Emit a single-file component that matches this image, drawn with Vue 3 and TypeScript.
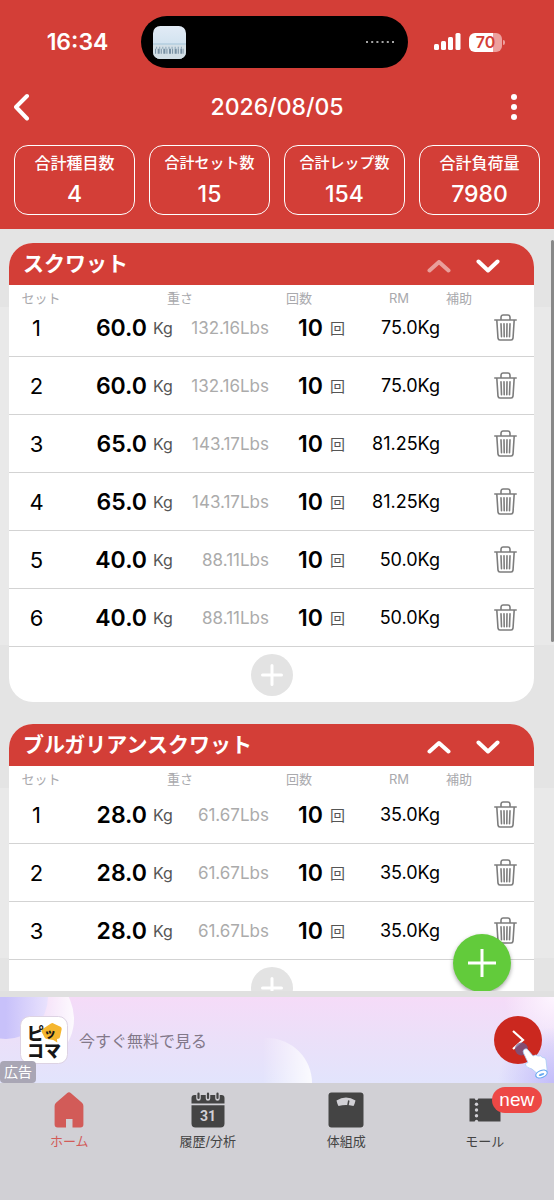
<script setup lang="ts">
interface SetRow {
  weight: string
  lbs: string
  reps: number
  rm: string
}
interface Exercise {
  name: string
  first: boolean
  sets: SetRow[]
}

const row = (weight: string, lbs: string, rm: string): SetRow => ({ weight, lbs, reps: 10, rm })

const stats = [
  { label: '合計種目数', value: '4', small: false },
  { label: '合計セット数', value: '15', small: true },
  { label: '合計レップ数', value: '154', small: true },
  { label: '合計負荷量', value: '7980', small: false },
]

const exercises: Exercise[] = [
  {
    name: 'スクワット',
    first: true,
    sets: [
      row('60.0', '132.16', '75.0'),
      row('60.0', '132.16', '75.0'),
      row('65.0', '143.17', '81.25'),
      row('65.0', '143.17', '81.25'),
      row('40.0', '88.11', '50.0'),
      row('40.0', '88.11', '50.0'),
    ],
  },
  {
    name: 'ブルガリアンスクワット',
    first: false,
    sets: [
      row('28.0', '61.67', '35.0'),
      row('28.0', '61.67', '35.0'),
      row('28.0', '61.67', '35.0'),
    ],
  },
]
</script>

<template>
  <div class="app">
    <header class="top">
      <div class="status">
        <span class="clock">16:34</span>
        <div class="island">
          <svg class="thumb" viewBox="0 0 32 32" aria-hidden="true">
            <defs>
              <linearGradient id="sky" x1="0" y1="0" x2="0" y2="1">
                <stop offset="0" stop-color="#e2ebf6" />
                <stop offset="1" stop-color="#c5dcea" />
              </linearGradient>
            </defs>
            <rect width="32" height="32" rx="7" fill="url(#sky)" />
            <path d="M0 18h32v7a7 7 0 0 1-7 7H7a7 7 0 0 1-7-7z" fill="#d3dfe6" />
            <path d="M0 17.500h32" stroke="#a3c3d6" />
            <path d="M2 24.500h28" stroke="#7890a3" stroke-width="5" stroke-dasharray="1 1.500 2 1" />
            <path d="M3 21h27" stroke="#8aa5b8" stroke-width="2" stroke-dasharray="1 2" />
          </svg>
          <svg class="dots" viewBox="0 0 30 4" aria-hidden="true">
            <path d="M0 2h30" stroke="#a5a5a5" stroke-width="2" stroke-dasharray="2 3.200" />
          </svg>
        </div>
        <div class="signals">
          <svg class="bars" viewBox="0 0 27 18" aria-hidden="true">
            <g fill="#fff">
              <rect x="0" y="11" width="5" height="6" rx="1.500" />
              <rect x="7" y="8" width="5" height="9" rx="1.500" />
              <rect x="14" y="4" width="5" height="13" rx="1.500" />
              <rect x="21.500" y="0" width="5" height="17" rx="1.500" />
            </g>
          </svg>
          <span class="battery">70</span>
        </div>
      </div>

      <div class="nav">
        <button class="nav-btn" aria-label="戻る">
          <svg width="18" height="28" viewBox="0 0 18 28" fill="none" stroke="#fff" stroke-width="4" stroke-linecap="round" stroke-linejoin="round"><path d="M13 3 2 14l11 11.500" /></svg>
        </button>
        <h1>2026/08/05</h1>
        <button class="nav-btn end" aria-label="メニュー">
          <svg width="8" height="28" viewBox="0 0 8 28" fill="#fff"><circle cx="4" cy="4" r="3" /><circle cx="4" cy="14" r="3" /><circle cx="4" cy="24" r="3" /></svg>
        </button>
      </div>

      <dl class="stats">
        <div v-for="s in stats" :key="s.label" class="stat">
          <dt :class="{ small: s.small }">{{ s.label }}</dt>
          <dd>{{ s.value }}</dd>
        </div>
      </dl>
    </header>

    <main class="workouts">
      <section v-for="ex in exercises" :key="ex.name" class="exercise">
        <div class="card">
          <div class="card-head">
            <h2>{{ ex.name }}</h2>
            <button class="move" :disabled="ex.first" aria-label="上へ移動">
              <svg width="24" height="16" viewBox="0 0 24 16"><path d="M2.500 12.500 12 4l9.500 8.500" /></svg>
            </button>
            <button class="move" aria-label="下へ移動">
              <svg width="24" height="16" viewBox="0 0 24 16"><path d="M2.500 3.500 12 12.500 21.500 3.500" /></svg>
            </button>
          </div>
          <table>
            <thead>
              <tr :class="{ tight: ex.first }">
                <th>セット</th>
                <th class="h-weight">重さ</th>
                <th class="h-reps">回数</th>
                <th class="h-rm">RM</th>
                <th class="h-rm">補助</th>
                <th></th>
              </tr>
            </thead>
            <tbody>
              <tr v-for="(s, i) in ex.sets" :key="i">
                <td class="c-set">{{ i + 1 }}</td>
                <td class="c-weight">
                  <strong>{{ s.weight }}</strong>
                  <span class="unit">Kg</span>
                  <span class="lbs">{{ s.lbs }}Lbs</span>
                </td>
                <td class="c-reps">
                  <strong>{{ s.reps }}</strong>
                  <span class="times">回</span>
                </td>
                <td class="c-rm">{{ s.rm }}Kg</td>
                <td></td>
                <td class="c-del">
                  <button class="trash" aria-label="削除">
                    <svg width="23" height="27" viewBox="0 0 23 27" fill="none" stroke="#7d7d7d" stroke-width="1.600" stroke-linecap="round" stroke-linejoin="round">
                      <path d="M.8 6h21.400M2.800 6 4 24.200Q4.200 26 5.900 26h11.200q1.700 0 1.900-1.800L20.200 6M7 6V3.200Q7.200 1 9.200 1h4.600q2 0 2.200 2.200V6" />
                      <path d="m7 9.700.5 13M10 9.700l.2 13M13 9.700l-.2 13M16 9.700l-.5 13" />
                    </svg>
                  </button>
                </td>
              </tr>
            </tbody>
          </table>
          <div class="add-row">
            <button class="add" aria-label="セットを追加">
              <svg width="42" height="42" viewBox="0 0 42 42" stroke="#fff" stroke-width="3" stroke-linecap="round"><path d="M21 11.500v19M11.500 21h19" /></svg>
            </button>
          </div>
        </div>
      </section>
      <span class="scrollbar"></span>
      <button class="fab" aria-label="種目を追加">
        <svg width="58" height="58" viewBox="0 0 58 58" stroke="#fff" stroke-width="3"><path d="M29 15v28M15 29h28" /></svg>
      </button>
    </main>

    <aside class="ad">
      <svg class="bubbles" width="330" height="86" viewBox="0 0 330 86" aria-hidden="true">
        <defs>
          <linearGradient id="fadeA"><stop offset=".6" stop-color="#fff" stop-opacity="0" /><stop offset="1" stop-color="#fff" stop-opacity=".85" /></linearGradient>
          <linearGradient id="fadeB"><stop offset=".45" stop-color="#fff" stop-opacity="0" /><stop offset="1" stop-color="#fff" stop-opacity=".85" /></linearGradient>
          <linearGradient id="fadeC"><stop offset=".5" stop-color="#c8c1fa" /><stop offset="1" stop-color="#e9e2fd" /></linearGradient>
        </defs>
        <circle cx="26" cy="22" r="48" fill="url(#fadeA)" />
        <circle cx="6" cy="0" r="42" fill="url(#fadeC)" />
        <circle cx="267" cy="86" r="45" fill="url(#fadeB)" />
      </svg>
      <svg class="ad-logo" viewBox="0 0 48 48" aria-hidden="true">
        <rect x=".5" y=".5" width="47" height="47" rx="9" fill="#fff" stroke="#ddd3e3" />
        <path d="M31 7.500q1.500-1 3 .2l6.500 3q1.300.7 1.200 2.200L40 21q-.3 1.600-2 1.700l-1 .3.300 3.500-4-2.500-6.500-1q-1.500-.2-2.200-1.600L21.700 16q-.7-1.500.5-2.700z" fill="#f5b62e" />
        <text x="7" y="24" class="logo-type">ピ</text>
        <text x="24" y="22" class="logo-small">ッ</text>
        <text x="7" y="41" class="logo-type">コマ</text>
      </svg>
      <span class="ad-text">今すぐ無料で見る</span>
      <button class="ad-go" aria-label="開く">
        <svg width="58" height="52" viewBox="0 0 58 52" fill="none">
          <circle cx="24" cy="24" r="24" fill="#cb281f" />
          <path d="m19 15 10 9-10 9" stroke="#fff" stroke-width="2.200" />
          <circle cx="27.500" cy="33" r="6.500" fill="#6b5a8f" fill-opacity=".75" />
        </svg>
        <svg class="hand" width="27" height="33" viewBox="0 0 27 33">
          <path d="M2 2.500Q4.500.5 6.500 3.500L11 9q3-2 5 0 3-1 4.500 1.500 3-.5 3.500 2.500l1 9q.5 3-2 5l-5 2-8-7q-5-1-6.500-4Q3 15.500 6 15.500L1.500 6Q.5 4 2 2.500z" fill="#fff" stroke="#a9cdf5" stroke-width=".8" />
          <ellipse cx="19.500" cy="27" rx="6" ry="3.500" transform="rotate(-22 19.500 27)" fill="#fff" stroke="#68aaf0" stroke-width="1.200" />
          <ellipse cx="19.500" cy="27.500" rx="3" ry="1" transform="rotate(-22 19.500 27.500)" fill="#68aaf0" />
        </svg>
      </button>
      <span class="ad-tag">広告</span>
    </aside>

    <nav class="tabs">
      <a class="tab active" href="#home">
        <svg width="30" height="36" viewBox="0 0 30 36" fill="currentColor"><path d="M13 1.200q2-1.700 4 0l11 9.600q1.400 1.300 1.400 3.200v18.500q0 3-3 3H18.500V27H12v8.500H3.600q-3 0-3-3V14q0-1.900 1.400-3.200z" /></svg>
        <span>ホーム</span>
      </a>
      <a class="tab" href="#history">
        <svg width="34" height="36" viewBox="0 0 34 36">
          <path d="M.5 11.500V6q0-3 3-3h27q3 0 3 3v5.500zM.5 13.300h33V31.500q0 4-4 4h-25q-4 0-4-4z" fill="#444" />
          <path d="M7.500 2v4.500M17 2v4.500M26.500 2v4.500" stroke="#d1d0d5" stroke-width="4.500" stroke-linecap="round" />
          <path d="M7.500 1.500V6M17 1.500V6M26.500 1.500V6" stroke="#444" stroke-width="2.200" stroke-linecap="round" />
          <text x="17" y="29" text-anchor="middle" class="day">31</text>
        </svg>
        <span>履歴/分析</span>
      </a>
      <a class="tab" href="#body">
        <svg width="36" height="36" viewBox="0 0 36 36">
          <rect x=".5" y=".5" width="35" height="35" rx="3" fill="#444" />
          <path d="M8.500 8.500q9.500-6 19 0-.8 3.500-2 5.500-7.500-1.800-15 0-1.200-2-2-5.500z" fill="#d1d0d5" />
          <path d="m19.800 14 1-5.500" stroke="#444" stroke-width="1.500" />
        </svg>
        <span>体組成</span>
      </a>
      <a class="tab" href="#mall">
        <svg width="32" height="36" viewBox="0 0 32 36">
          <path d="M.5 6.500h31v23H.5z" fill="#444" />
          <g fill="#d1d0d5"><circle cx="7.500" cy="6.500" r="1.700" /><circle cx="7.500" cy="12.300" r="1.700" /><circle cx="7.500" cy="18" r="1.700" /><circle cx="7.500" cy="23.700" r="1.700" /><circle cx="7.500" cy="29.500" r="1.700" /></g>
        </svg>
        <span>モール</span>
        <em class="badge">new</em>
      </a>
    </nav>
  </div>
</template>

<style>
body {
  margin: 0;
}
</style>

<style scoped>
.app {
  display: flex;
  flex-direction: column;
  height: 100vh;
  font-family: Inter, "Noto Sans CJK JP", sans-serif;
  color: #000;
  background: #e4e4e4;
}
button {
  border: 0;
  padding: 0;
  background: none;
  display: grid;
  place-items: center;
}
svg {
  display: block;
}
h1,
h2,
dl,
dd {
  margin: 0;
}

.top {
  flex: none;
  background: #d33e37;
  color: #fff;
  padding: 16px 14px 14px;
}
.status {
  display: grid;
  grid-template-columns: 1fr 267px 1fr;
  height: 52px;
  align-items: center;
  padding-right: 5px;
}
.clock {
  text-align: center;
  font-size: 23px;
  font-weight: 600;
}
.island {
  height: 52px;
  border-radius: 26px;
  background: #000;
  display: flex;
  align-items: center;
  justify-content: space-between;
  padding: 0 12px;
  box-sizing: border-box;
}
.thumb {
  width: 33px;
  height: 33px;
}
.dots {
  width: 30px;
  height: 4px;
}
.signals {
  display: flex;
  align-items: center;
  gap: 8px;
  padding-left: 26px;
}
.bars {
  width: 27px;
  height: 18px;
}
.battery {
  position: relative;
  width: 33px;
  height: 19px;
  border-radius: 6px;
  background: linear-gradient(90deg, #fff 72%, #eda09d 72%);
  color: #d33e37;
  font-size: 16px;
  line-height: 19px;
  font-weight: 600;
  text-align: center;
}
.battery::after {
  content: "";
  position: absolute;
  right: -3px;
  top: 7px;
  width: 2px;
  height: 5px;
  border-radius: 0 2px 2px 0;
  background: #eda09d;
}
.nav {
  display: grid;
  grid-template-columns: 40px 1fr 40px;
  align-items: center;
  height: 77px;
}
.nav-btn {
  height: 44px;
  justify-content: start;
}
.nav-btn.end {
  justify-content: end;
  padding-right: 22px;
}
h1 {
  text-align: center;
  font-size: 23px;
  font-weight: 500;
}
.stats {
  display: grid;
  grid-template-columns: repeat(4, 1fr);
  gap: 14px;
}
.stat {
  border: 1px solid #fff;
  border-radius: 14px;
  height: 68px;
  text-align: center;
  white-space: nowrap;
}
dt {
  font-size: 16px;
  font-weight: 500;
  line-height: 24px;
  padding-top: 5px;
}
dt.small {
  font-size: 15px;
}
dd {
  font-size: 23px;
  font-weight: 500;
  line-height: 38px;
}

.workouts {
  position: relative;
  flex: 1;
  min-height: 0;
  overflow: hidden;
  padding-top: 14px;
  border-bottom: 6px solid #e0e0e0;
}
.exercise {
  padding: 0 20px 0 9px;
  margin-bottom: 22px;
  background: linear-gradient(#e4e4e4 64px, #e9e9e9 64px, #e9e9e9 calc(100% - 57px), #e4e4e4 0);
}
.card {
  border-radius: 24px;
  background: #fff;
  overflow: hidden;
}
.card-head {
  height: 42px;
  display: flex;
  align-items: center;
  padding: 0 22px 0 14px;
  background: #d33e37;
  color: #fff;
}
h2 {
  flex: 1;
  font-size: 21px;
  line-height: 42px;
  font-weight: 700;
}
.move {
  width: 49px;
  height: 42px;
  padding-top: 4px;
}
.move path {
  fill: none;
  stroke: #fff;
  stroke-width: 4px;
  stroke-linecap: round;
  stroke-linejoin: round;
}
.move:disabled {
  opacity: 0.5;
}
table,
thead,
tbody {
  display: block;
}
tr {
  display: grid;
  grid-template-columns: 64fr 207fr 81fr 79fr 41fr 53fr;
}
thead tr {
  height: 20px;
}
thead tr.tight {
  height: 14px;
}
th {
  padding: 0;
  font-size: 13px;
  line-height: 26px;
  font-weight: 400;
  color: #a9a9ad;
}
.h-weight {
  padding-left: 7px;
}
.h-reps {
  text-align: left;
  padding-left: 6px;
}
.h-rm {
  padding-right: 3px;
}
tbody tr {
  height: 57px;
  border-bottom: 1px solid #d3d3d3;
}
td {
  display: flex;
  align-items: center;
  padding: 0;
}
strong {
  font-size: 23px;
  font-weight: 600;
}
.c-set {
  justify-content: center;
  padding-right: 9px;
  font-size: 22px;
}
.c-weight {
  justify-content: flex-end;
  padding-right: 11px;
}
.unit {
  width: 22px;
  margin-left: 6px;
  font-size: 16px;
  color: #555;
}
.lbs {
  width: 94px;
  text-align: right;
  font-size: 17px;
  color: #ababab;
}
.c-reps {
  padding-left: 18px;
}
.times {
  margin-left: 7px;
  font-size: 15px;
  color: #555;
}
.c-rm {
  justify-content: flex-end;
  font-size: 18px;
}
.c-del {
  justify-content: center;
  padding-right: 5px;
}
.trash {
  width: 34px;
  height: 40px;
}
.add-row {
  display: flex;
  justify-content: center;
  padding: 7px 0 6px;
}
.add {
  width: 42px;
  height: 42px;
  border-radius: 50%;
  background: #e3e3e3;
}
.scrollbar {
  position: absolute;
  top: 11px;
  right: 0;
  width: 3px;
  height: 402px;
  border-radius: 2px;
  background: #888;
}
.fab {
  position: absolute;
  right: 43px;
  bottom: -1px;
  width: 58px;
  height: 58px;
  border-radius: 50%;
  background: #62cb3b;
  box-shadow: 0 2px 4px rgba(0, 0, 0, 0.35);
}

.ad {
  position: relative;
  flex: none;
  height: 86px;
  display: flex;
  align-items: center;
  padding: 0 8px 0 20px;
  overflow: hidden;
  background:
    radial-gradient(circle at 100% 100%, #c3bcfa 0, rgba(195, 188, 250, 0) 56px),
    radial-gradient(circle at 100% 0, #fdf5ff 0, rgba(255, 255, 255, 0) 50px),
    linear-gradient(#f5dbf8, #ebe0f9 50%, #e2e4fc);
}
.bubbles {
  position: absolute;
  left: 0;
  top: 0;
}
.ad-logo {
  position: relative;
  width: 48px;
  height: 48px;
}
.logo-type {
  font: 900 17px "Noto Sans CJK JP", sans-serif;
  fill: #161616;
}
.logo-small {
  font: 900 12px "Noto Sans CJK JP", sans-serif;
  fill: #161616;
}
.ad-text {
  position: relative;
  flex: 1;
  margin-left: 11px;
  font-size: 16px;
  color: #827889;
}
.ad-go {
  position: relative;
  width: 52px;
  height: 48px;
  justify-content: start;
  align-content: start;
}
.hand {
  position: absolute;
  left: 28px;
  top: 31px;
}
.ad-tag {
  position: absolute;
  left: 0;
  bottom: 0;
  width: 36px;
  height: 22px;
  border-radius: 4px;
  background: #a9a6b5;
  color: #fff;
  font-size: 14px;
  line-height: 22px;
  text-align: center;
}

.tabs {
  flex: none;
  display: grid;
  grid-template-columns: repeat(4, 1fr);
  height: 117px;
  background: #d1d0d5;
}
.tab {
  position: relative;
  display: flex;
  flex-direction: column;
  align-items: center;
  gap: 3px;
  padding-top: 9px;
  font-size: 13px;
  line-height: 20px;
  color: #444;
  text-decoration: none;
}
.tab.active {
  color: #d25b58;
}
.day {
  font: 700 14px Roboto, sans-serif;
  fill: #d1d0d5;
}
.badge {
  position: absolute;
  left: 50%;
  top: 4px;
  margin-left: 7px;
  width: 50px;
  height: 26px;
  border-radius: 13px;
  background: #ed4845;
  color: #fff;
  font-family: "Liberation Sans", sans-serif;
  font-size: 19px;
  line-height: 25px;
  font-style: normal;
  text-align: center;
}
</style>
